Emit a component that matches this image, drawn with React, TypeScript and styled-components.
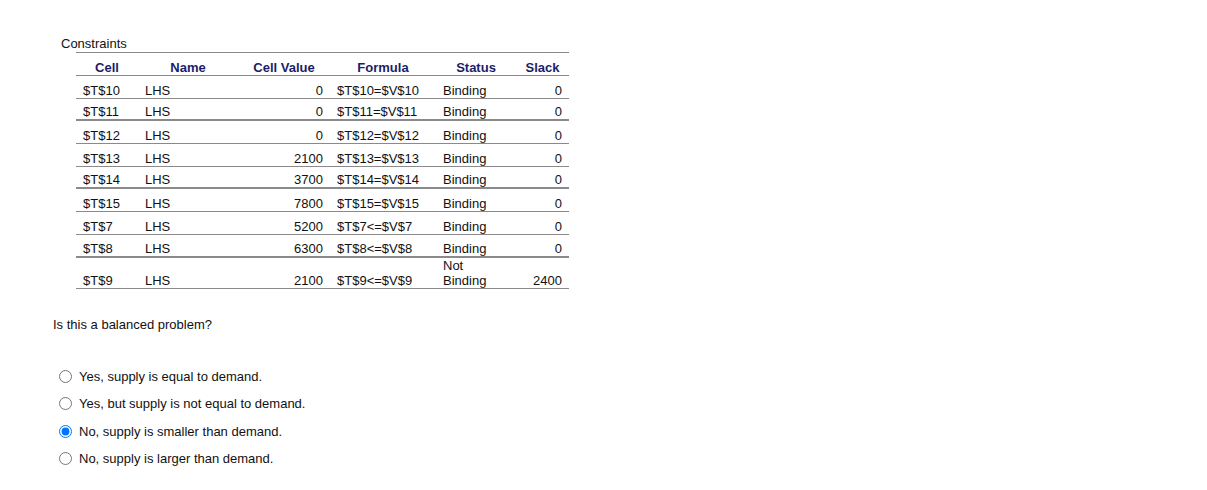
import React from "react";
import styled, { createGlobalStyle } from "styled-components";

interface constraintRow {
  Cell: string;
  Name: string;
  Value: string;
  Formula: string;
  Status: string[];
  Slack: string;
  Thick?: boolean;
}

const rows: constraintRow[] = [
  { Cell: "$T$10", Name: "LHS", Value: "0", Formula: "$T$10=$V$10", Status: ["Binding"], Slack: "0" },
  { Cell: "$T$11", Name: "LHS", Value: "0", Formula: "$T$11=$V$11", Status: ["Binding"], Slack: "0", Thick: true },
  { Cell: "$T$12", Name: "LHS", Value: "0", Formula: "$T$12=$V$12", Status: ["Binding"], Slack: "0" },
  { Cell: "$T$13", Name: "LHS", Value: "2100", Formula: "$T$13=$V$13", Status: ["Binding"], Slack: "0" },
  { Cell: "$T$14", Name: "LHS", Value: "3700", Formula: "$T$14=$V$14", Status: ["Binding"], Slack: "0", Thick: true },
  { Cell: "$T$15", Name: "LHS", Value: "7800", Formula: "$T$15=$V$15", Status: ["Binding"], Slack: "0" },
  { Cell: "$T$7", Name: "LHS", Value: "5200", Formula: "$T$7<=$V$7", Status: ["Binding"], Slack: "0" },
  { Cell: "$T$8", Name: "LHS", Value: "6300", Formula: "$T$8<=$V$8", Status: ["Binding"], Slack: "0", Thick: true },
  { Cell: "$T$9", Name: "LHS", Value: "2100", Formula: "$T$9<=$V$9", Status: ["Not", "Binding"], Slack: "2400" },
];

const options = [
  "Yes, supply is equal to demand.",
  "Yes, but supply is not equal to demand.",
  "No, supply is smaller than demand.",
  "No, supply is larger than demand.",
];

const GlobalStyle = createGlobalStyle`
  body {
    margin: 0;
    background: #fff;
    font-family: "Liberation Sans", Arial, sans-serif;
    font-size: 13px;
    color: #111;
  }
`;

// whole page content
const Page = styled.div`
  padding: 36px 0 0 53px;
`;

// the "Constraints" block: title plus table
const Section = styled.div`
  padding-left: 8px;
`;

const Title = styled.div`
  line-height: 16px;
`;

const Table = styled.table`
  margin-left: 15px;
  border-collapse: collapse;
  border-top: 1px solid #8a8a8a;
`;

const Row = styled.tr<{ $thick?: boolean }>`
  border-bottom: ${(p) => (p.$thick ? "2px" : "1px")} solid #8a8a8a;
  & > td {
    height: ${(p) => (p.$thick ? "20.7px" : "21.7px")};
  }
`;

const HeadCell = styled.th<{ $w: number }>`
  width: ${(p) => p.$w}px;
  box-sizing: border-box;
  padding: 0 7px 0;
  height: 23px;
  vertical-align: bottom;
  text-align: center;
  font-weight: bold;
  color: #1c1c6b;
  white-space: nowrap;
`;

const Cell = styled.td<{ $right?: boolean }>`
  padding: 0 7px 0;
  vertical-align: bottom;
  text-align: ${(p) => (p.$right ? "right" : "left")};
  line-height: 15px;
  white-space: nowrap;
`;

// question and answers
const Question = styled.div`
  margin-top: 28px;
  line-height: 16px;
`;

const Options = styled.div`
  margin-top: 36px;
  display: flex;
  flex-direction: column;
  gap: 11.3px;
`;

const Option = styled.label`
  display: flex;
  align-items: center;
  height: 16px;
`;

const Radio = styled.input`
  width: 13px;
  height: 13px;
  margin: 0 7px 0 6px;
`;

const App: React.FC = () => {
  return (
    <Page>
      <GlobalStyle />
      <Section>
        <Title>Constraints</Title>
        <Table>
          <thead>
            <Row>
              <HeadCell $w={62}>Cell</HeadCell>
              <HeadCell $w={100}>Name</HeadCell>
              <HeadCell $w={92}>Cell Value</HeadCell>
              <HeadCell $w={106}>Formula</HeadCell>
              <HeadCell $w={80}>Status</HeadCell>
              <HeadCell $w={53}>Slack</HeadCell>
            </Row>
          </thead>
          <tbody>
            {rows.map((r) => (
              <Row key={r.Cell} $thick={r.Thick}>
                <Cell>{r.Cell}</Cell>
                <Cell>{r.Name}</Cell>
                <Cell $right>{r.Value}</Cell>
                <Cell>{r.Formula}</Cell>
                <Cell>
                  {r.Status.map((s, i) => (
                    <div key={i}>{s}</div>
                  ))}
                </Cell>
                <Cell $right>{r.Slack}</Cell>
              </Row>
            ))}
          </tbody>
        </Table>
      </Section>
      <Question>Is this a balanced problem?</Question>
      <Options>
        {options.map((o, i) => (
          <Option key={o}>
            <Radio type="radio" name="balanced" defaultChecked={i === 2} />
            {o}
          </Option>
        ))}
      </Options>
    </Page>
  );
};

export default App;
